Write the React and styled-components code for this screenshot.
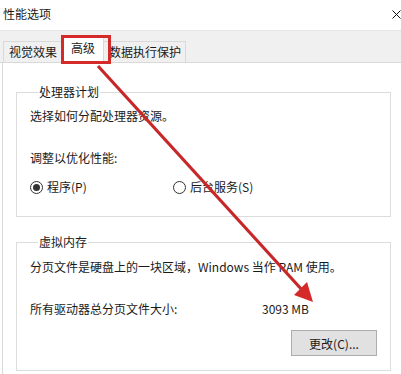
import React from 'react';
import styled, { createGlobalStyle } from 'styled-components';

const GlobalStyle = createGlobalStyle`
  html, body {
    margin: 0;
    padding: 0;
    background: #ffffff;
    overflow: hidden;
  }
  body {
    font-family: "Noto Sans CJK SC", "Noto Sans", sans-serif;
    font-size: 12px;
    color: #1a1a1a;
  }
`

const Window = styled.div`
  position: relative;
  width: 401px;
  height: 374px;
  background: #ffffff;
  overflow: hidden;
  display: flex;
  flex-direction: column;
`

const TitleBar = styled.div`
  height: 30px;
  display: flex;
  align-items: center;
  justify-content: space-between;
  padding: 0 0 2px 3px;
  box-sizing: border-box;
  line-height: 16px;
`

const Close = styled.svg`
  width: 9px;
  height: 9px;
`

const TabStrip = styled.div`
  height: 33px;
  box-sizing: border-box;
  background: #f0f0f0;
  border-top: 1px solid #e6e6e6;
  border-bottom: 1px solid #d9d9d9;
  display: flex;
  align-items: flex-end;
  padding-left: 3px;
`

const Tab = styled.div`
  height: ${p => (p.$active ? '28px' : '21px')};
  margin-bottom: ${p => (p.$active ? '-1px' : '0')};
  box-sizing: border-box;
  padding: ${p => (p.$active ? '4px 8px 0' : '2px 4px 0 5px')};
  background: ${p => (p.$active ? '#ffffff' : '#f0f0f0')};
  border: 1px solid #d9d9d9;
  border-bottom: none;
  border-left: ${p => (p.$active ? '1px solid #d9d9d9' : 'none')};
  line-height: 16px;
  &:first-child {
    border-left: 1px solid #d9d9d9;
  }
`

const Panel = styled.div`
  flex: 1;
  margin-left: 2px;
  border-left: 1px solid #d9d9d9;
  padding: 21px 0 0 13px;
  display: flex;
  flex-direction: column;
  gap: 17px;
`

const Group = styled.fieldset`
  margin: 0;
  width: 375px;
  box-sizing: border-box;
  border: 1px solid #dcdcdc;
  padding: ${p => p.$pad};
  min-inline-size: 0;
  display: flex;
  flex-direction: column;
`

const Legend = styled.legend`
  padding: 0 1px;
  margin-left: 8px;
  line-height: 16px;
`

const Text = styled.div`
  line-height: 16px;
  margin-top: ${p => p.$top || 0}px;
  white-space: nowrap;
`

const RadioRow = styled.div`
  display: flex;
  margin-top: 13px;
  line-height: 16px;
`

const RadioItem = styled.label`
  display: flex;
  align-items: center;
  gap: 4px;
  width: ${p => p.$w || 'auto'};
`

const Circle = styled.span`
  width: 13px;
  height: 13px;
  box-sizing: border-box;
  border: 1px solid #333333;
  border-radius: 50%;
  display: flex;
  align-items: center;
  justify-content: center;
  &::after {
    content: '';
    width: 7px;
    height: 7px;
    border-radius: 50%;
    background: ${p => (p.$checked ? '#333333' : 'transparent')};
  }
`

const SizeRow = styled.div`
  display: flex;
  margin-top: 26px;
  line-height: 16px;
`

const SizeLabel = styled.span`
  width: 232px;
`

const ButtonRow = styled.div`
  display: flex;
  justify-content: flex-end;
  margin-top: 13px;
`

const Button = styled.button`
  width: 86px;
  height: 26px;
  background: #e1e1e1;
  border: 1px solid #adadad;
  font-family: inherit;
  font-size: 12px;
  color: #1a1a1a;
  padding: 0;
`

const Overlay = styled.svg`
  position: absolute;
  left: 0;
  top: 0;
  pointer-events: none;
`

const App = () => {
  return (
    <Window>
      <GlobalStyle />
      <TitleBar>
        <span>性能选项</span>
        <Close viewBox="0 0 9 9">
          <path d="M0.5 0.5 L8.5 8.5 M8.5 0.5 L0.5 8.5" stroke="#111" strokeWidth="1" />
        </Close>
      </TitleBar>
      <TabStrip>
        <Tab>视觉效果</Tab>
        <Tab $active>高级</Tab>
        <Tab>数据执行保护</Tab>
      </TabStrip>
      <Panel>
        <Group $pad="8px 13px 21px">
          <Legend>处理器计划</Legend>
          <Text>选择如何分配处理器资源。</Text>
          <Text $top={26}>调整以优化性能:</Text>
          <RadioRow>
            <RadioItem $w="143px">
              <Circle $checked />
              程序(P)
            </RadioItem>
            <RadioItem>
              <Circle />
              后台服务(S)
            </RadioItem>
          </RadioRow>
        </Group>
        <Group $pad="9px 13px 14px">
          <Legend>虚拟内存</Legend>
          <Text>分页文件是硬盘上的一块区域，Windows 当作 RAM 使用。</Text>
          <SizeRow>
            <SizeLabel>所有驱动器总分页文件大小:</SizeLabel>
            <span>3093 MB</span>
          </SizeRow>
          <ButtonRow>
            <Button>更改(C)...</Button>
          </ButtonRow>
        </Group>
      </Panel>
      <Overlay width="401" height="374" viewBox="0 0 401 374">
        <rect x="62.5" y="36.5" width="47" height="26" fill="none" stroke="#d42a2a" strokeWidth="3" />
        <line x1="98" y1="66" x2="303" y2="291" stroke="#c8272a" strokeWidth="3.2" />
        <polygon points="313,302 294,295 307,282" fill="#d42a2a" />
      </Overlay>
    </Window>
  );
}

export default App;
